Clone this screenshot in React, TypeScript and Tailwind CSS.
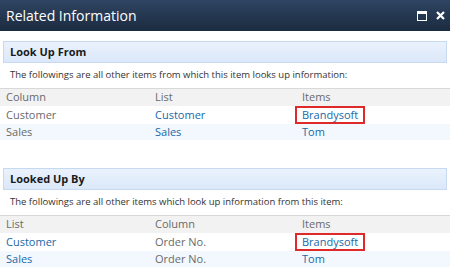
const font = { fontFamily: '"Open Sans", "DejaVu Sans", sans-serif' }

type Cell = { text: string; link?: boolean; boxed?: boolean }

function Section({
  title,
  note,
  head,
  rows,
}: {
  title: string
  note: string
  head: string[]
  rows: Cell[][]
}) {
  return (
    <div>
      <div className="mx-[3px] flex h-[22px] items-center border border-[#c6d9f0] bg-gradient-to-b from-[#eaf2fc] to-[#dbe8f9] px-[6px] text-[11px] font-bold text-[#1b1b1b]">
        {title}
      </div>
      <div className="flex h-[25px] items-center pl-[10px] text-[9.5px] text-[#333]">{note}</div>
      <div className="grid h-[18px] grid-cols-[149px_147px_1fr] items-center border-t border-[#d8d8d8] bg-[#f2f2f2] pl-[6px] text-[11px] text-[#6a6a6a]">
        {head.map((h) => (
          <span key={h}>{h}</span>
        ))}
      </div>
      {rows.map((row, i) => (
        <div
          key={i}
          className={`grid grid-cols-[149px_147px_1fr] items-center pl-[6px] text-[11px] ${
            i === 0 ? "h-[18px] bg-white" : "h-[16px] bg-[#f2f8fd]"
          }`}
        >
          {row.map((c, j) => (
            <span key={j} className={c.link ? "text-[#2068a8]" : "text-[#6a6a6a]"}>
              {c.boxed ? (
                <span className="-ml-[7px] inline-block border-2 border-[#e02a2a] px-[5px] leading-[14px]">
                  {c.text}
                </span>
              ) : (
                c.text
              )}
            </span>
          ))}
        </div>
      ))}
    </div>
  )
}

export default function App() {
  return (
    <div className="h-[273px] w-[450px] overflow-hidden bg-white" style={font}>
      <div className="flex h-[31px] items-center justify-between bg-gradient-to-b from-[#2f4563] to-[#1b2b40] pl-[6px] pr-[5px]">
        <span className="text-[14px] text-white">Related Information</span>
        <div className="flex items-center gap-[9px]">
          <svg width="10" height="10" viewBox="0 0 10 10">
            <rect x="0.5" y="0.5" width="9" height="9" fill="none" stroke="#fff" />
            <rect x="0" y="0" width="10" height="3" fill="#fff" />
          </svg>
          <svg width="9" height="9" viewBox="0 0 9 9">
            <path d="M1 1L8 8M8 1L1 8" stroke="#fff" strokeWidth="2.2" />
          </svg>
        </div>
      </div>
      <div className="pt-[10px]">
        <Section
          title="Look Up From"
          note="The followings are all other items from which this item looks up information:"
          head={["Column", "List", "Items"]}
          rows={[
            [{ text: "Customer" }, { text: "Customer", link: true }, { text: "Brandysoft", link: true, boxed: true }],
            [{ text: "Sales" }, { text: "Sales", link: true }, { text: "Tom", link: true }],
          ]}
        />
      </div>
      <div className="pt-[28px]">
        <Section
          title="Looked Up By"
          note="The followings are all other items which look up information from this item:"
          head={["List", "Column", "Items"]}
          rows={[
            [{ text: "Customer", link: true }, { text: "Order No." }, { text: "Brandysoft", link: true, boxed: true }],
            [{ text: "Sales", link: true }, { text: "Order No." }, { text: "Tom", link: true }],
          ]}
        />
      </div>
    </div>
  )
}
